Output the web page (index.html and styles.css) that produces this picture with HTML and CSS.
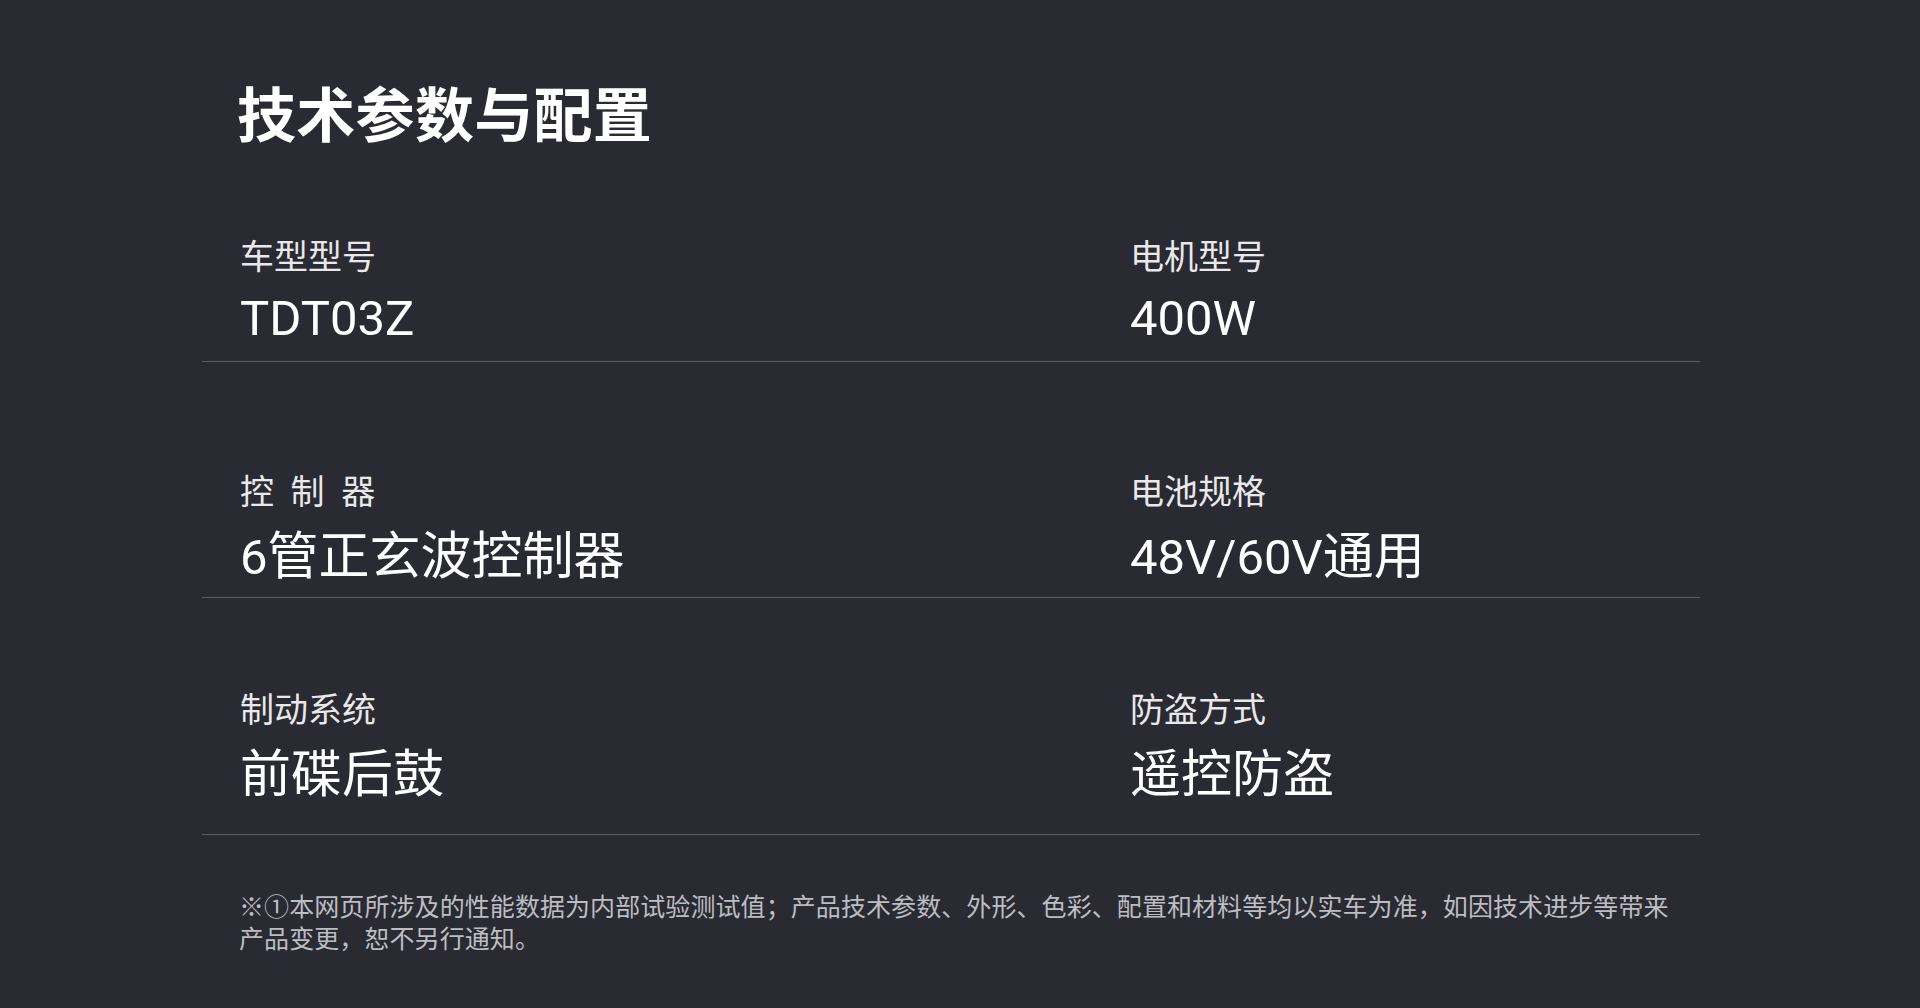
FILE: index.html
```html
<!DOCTYPE html>
<html lang="zh-CN">
<head>
<meta charset="utf-8">
<title>技术参数与配置</title>
<link rel="stylesheet" href="styles.css">
</head>
<body>
<main class="page">
  <section class="specs">
    <h1 class="specs__title">技术参数与配置</h1>
    <div class="specs__list">
      <div class="spec-row">
        <div class="spec">
          <div class="spec__label">车型型号</div>
          <div class="spec__value"><span class="spec__num">TDT03Z</span></div>
        </div>
        <div class="spec">
          <div class="spec__label">电机型号</div>
          <div class="spec__value"><span class="spec__num">400W</span></div>
        </div>
      </div>
      <div class="spec-row spec-row--cjk">
        <div class="spec">
          <div class="spec__label spec__label--spaced">控 制 器</div>
          <div class="spec__value"><span class="spec__num">6</span>管正玄波控制器</div>
        </div>
        <div class="spec">
          <div class="spec__label">电池规格</div>
          <div class="spec__value"><span class="spec__num">48V/60V</span>通用</div>
        </div>
      </div>
      <div class="spec-row spec-row--cjk spec-row--last">
        <div class="spec">
          <div class="spec__label">制动系统</div>
          <div class="spec__value">前碟后鼓</div>
        </div>
        <div class="spec">
          <div class="spec__label">防盗方式</div>
          <div class="spec__value">遥控防盗</div>
        </div>
      </div>
    </div>
    <p class="specs__note">※①本网页所涉及的性能数据为内部试验测试值；产品技术参数、外形、色彩、配置和材料等均以实车为准，如因技术进步等带来产品变更，恕不另行通知。</p>
  </section>
</main>
</body>
</html>
```

FILE: styles.css
```css
html, body {
  margin: 0;
  padding: 0;
  background: #292a32;
}

body {
  font-family: "Noto Sans CJK SC", "Noto Sans", sans-serif;
  color: #ffffff;
  min-height: 1008px;
}

.page {
  padding-top: 82px;
}

.specs {
  width: 1498px;
  margin-left: 202px;
}

.specs__title {
  margin: 0;
  padding-left: 35px;
  font-size: 59px;
  line-height: 59px;
  font-weight: 700;
  letter-spacing: 0.3px;
  color: #ffffff;
}

.specs__list {
  display: flex;
  flex-direction: column;
}

.spec-row {
  display: grid;
  grid-template-columns: 890px 1fr;
  padding: 94px 0 12px 38px;
  border-bottom: 1px solid #5d5e65;
  --spec-gap: 13px;
}

.spec-row--cjk {
  padding-top: 108px;
  padding-bottom: 9px;
  --spec-gap: 17px;
}

.spec-row--last {
  padding-top: 90px;
  padding-bottom: 29px;
}

.spec {
  display: flex;
  flex-direction: column;
  gap: var(--spec-gap);
}

.spec__label {
  font-size: 34px;
  line-height: 40px;
  color: #e9e9eb;
}

.spec__label--spaced {
  word-spacing: 9px;
}

.spec__value {
  font-family: "Roboto", "Noto Sans CJK SC", sans-serif;
  font-size: 51px;
  line-height: 60px;
  color: #ffffff;
}

.spec__num {
  font-size: 49px;
}

.specs__note {
  margin: 54px 0 0;
  padding-left: 37px;
  width: 1440px;
  font-size: 25px;
  line-height: 32px;
  letter-spacing: 0.08px;
  color: #bdbdc2;
}
```
